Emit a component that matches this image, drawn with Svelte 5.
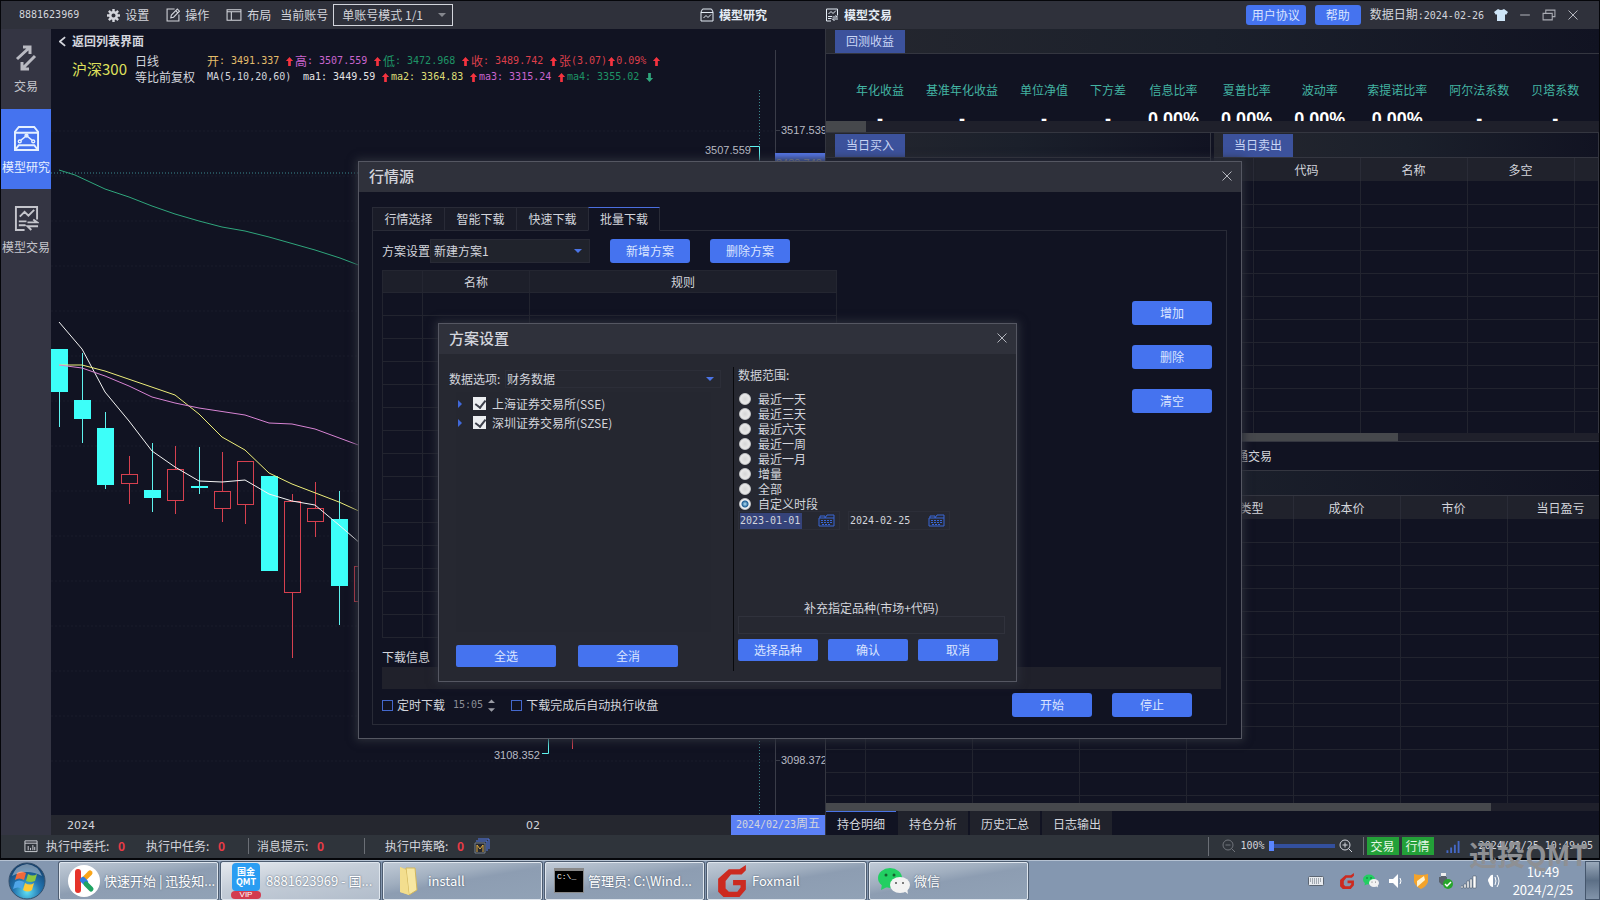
<script>
	let account = $state('单账号模式 1/1');
	let scheme = $state('新建方案1');
	let dataOption = $state('财务数据');
	let range = $state('自定义时段');
	let startDate = $state('2023-01-01');
	let endDate = $state('2024-02-25');
	let extraCodes = $state('');
	let zoom = $state(0);

	const priceRow = [
		{ label: '开', value: '3491.337', color: 'gold' },
		{ label: '高', value: '3507.559', color: 'violet' },
		{ label: '低', value: '3472.968', color: 'green' },
		{ label: '收', value: '3489.742', color: 'red' }
	];

	const maRow = [
		{ label: 'ma1', value: '3449.59', color: 'white' },
		{ label: 'ma2', value: '3364.83', color: 'yellow' },
		{ label: 'ma3', value: '3315.24', color: 'violet' },
		{ label: 'ma4', value: '3355.02', color: 'green', down: true }
	];

	const gridLines = Array.from({ length: 15 }, (_, i) => 41 + i * 45);

	// x, top and bottom of the body, top and bottom of the wick
	const candles = [
		{ x: 0, top: 259, bottom: 302, high: 302, low: 337, up: false },
		{ x: 23, top: 310, bottom: 329, high: 263, low: 353, up: false },
		{ x: 46, top: 338, bottom: 395, high: 322, low: 399, up: false },
		{ x: 70, top: 384, bottom: 394, high: 366, low: 414, up: true },
		{ x: 93, top: 400, bottom: 408, high: 353, low: 422, up: false },
		{ x: 116, top: 379, bottom: 411, high: 356, low: 424, up: true },
		{ x: 140, top: 396, bottom: 398, high: 357, low: 404, up: false },
		{ x: 163, top: 401, bottom: 419, high: 362, low: 432, up: true },
		{ x: 186, top: 371, bottom: 415, high: 371, low: 434, up: true },
		{ x: 210, top: 386, bottom: 481, high: 386, low: 481, up: false },
		{ x: 233, top: 411, bottom: 503, high: 404, low: 568, up: true },
		{ x: 256, top: 418, bottom: 432, high: 392, low: 447, up: true },
		{ x: 280, top: 429, bottom: 496, high: 401, low: 535, up: false },
		{ x: 303, top: 476, bottom: 512, high: 476, low: 512, up: true }
	];

	const averages = [
		{
			color: '#f4f4f4',
			points:
				'8,232 31,259 54,302 78,331 101,361 124,377 148,391 171,392 194,390 218,404 241,411 264,415 288,435 310,454'
		},
		{
			color: '#eeee7a',
			points: '8,275 31,275 54,281 124,305 148,324 171,347 194,360 218,383 241,394 288,412 310,422'
		},
		{
			color: '#d884d4',
			points:
				'8,275 31,278 54,286 78,296 101,307 124,313 148,318 194,325 218,333 241,334 264,339 310,356'
		},
		{
			color: '#2fa67c',
			points:
				'8,80 24,85 54,99 78,107 101,116 124,124 148,131 171,137 194,141 218,147 264,160 289,168 310,176'
		}
	];

	const metrics = [
		['年化收益', '-'],
		['基准年化收益', '-'],
		['单位净值', '-'],
		['下方差', '-'],
		['信息比率', '0.00%'],
		['夏普比率', '0.00%'],
		['波动率', '0.00%'],
		['索提诺比率', '0.00%'],
		['阿尔法系数', '-'],
		['贝塔系数', '-']
	];

	const sellColumns = ['', '代码', '名称', '多空', ''];
	const positionColumns = ['', '', '', '', '持仓类型', '成本价', '市价', '当日盈亏'];
	const positionTabs = ['持仓明细', '持仓分析', '历史汇总', '日志输出'];
	const sourceTabs = ['行情选择', '智能下载', '快速下载', '批量下载'];
	const ranges = [
		'最近一天',
		'最近三天',
		'最近六天',
		'最近一周',
		'最近一月',
		'增量',
		'全部',
		'自定义时段'
	];
	const exchanges = ['上海证券交易所(SSE)', '深圳证券交易所(SZSE)'];
	const rows = (n) => Array.from({ length: n });
</script>

{#snippet arrow(down)}
	<svg class="arrow" class:down viewBox="0 0 10 10"><path d="M5 0l4 4.500H6.500V10h-3V4.500H1z" /></svg>
{/snippet}

{#snippet cross()}
	<svg class="cross" viewBox="0 0 12 12"><path d="M1.500 1.500l9 9m0-9l-9 9" /></svg>
{/snippet}

{#snippet calendar()}
	<svg viewBox="0 0 17 13">
		<path d="M1 4h15v8H1zM2 4V2h5v2M7 4l2-3h7v3" />
		<path d="M3 6.500h11M3 8.500h11M4 10.500h9" stroke-dasharray="2 1" />
	</svg>
{/snippet}

{#snippet modelIcon()}
	<svg class="line-icon" viewBox="0 0 26 28">
		<path d="M5 2h16l4 5v19H1V7zM1 8h24M1 26l4-5h16l4 5" />
		<path d="M7 16l6-5 6 5" stroke-width="1.500" />
		<g stroke-width="1.500">
			<circle cx="6" cy="17" r="1.500" /><circle cx="20" cy="17" r="1.500" /><circle cx="13" cy="11" r="1.500" />
		</g>
	</svg>
{/snippet}

{#snippet tradeIcon()}
	<svg class="line-icon" viewBox="0 0 26 28">
		<path d="M24 15V2H2v24h9M6 12l5-5 4 4 6-6M5 17h8M5 21h7M14 18h10l-4-3M25 22H14l4 4" />
	</svg>
{/snippet}

{#snippet foxmail()}
	<svg viewBox="0 0 28 30">
		<path
			d="M27 0v5l-4 4H13l-5 6v7l3 3h8l3-4v-2h-7v-5h12v9l-6 7H6l-5-5V13L11 4h10z"
			fill="#cc2a20"
		/>
	</svg>
{/snippet}

{#snippet wechat()}
	<svg viewBox="0 0 32 28">
		<ellipse cx="12" cy="11" rx="12" ry="10" fill="#22cf62" />
		<path d="M4 17l-1 6 6-3z" fill="#22cf62" />
		<circle cx="8" cy="8" r="1.500" fill="#14632f" /><circle cx="16" cy="8" r="1.500" fill="#14632f" />
		<ellipse cx="22" cy="18" rx="10" ry="8" fill="#f2f2f2" />
		<path d="M26 24l4 3-1-6z" fill="#f2f2f2" />
		<circle cx="18" cy="16" r="1" fill="#555" /><circle cx="25" cy="16" r="1" fill="#555" />
	</svg>
{/snippet}

{#snippet grid(columns, count)}
	<table class="grid">
		<thead>
			<tr>
				{#each columns as column, i}
					<th class:index={i === 0}>{column}</th>
				{/each}
			</tr>
		</thead>
		<tbody>
			{#each rows(count) as _}
				<tr>
					{#each columns as _}
						<td></td>
					{/each}
				</tr>
			{/each}
		</tbody>
	</table>
{/snippet}

<div class="desktop">
	<div class="window">
		<header class="titlebar">
			<div class="menu">
				<span class="num account-id">8881623969</span>
				<button class="plain">
					<svg class="gear" viewBox="0 0 16 16">
						<circle cx="8" cy="8" r="4" />
						<path d="M8 0v4M8 12v4M0 8h4M12 8h4M2.300 2.300l3 3M10.700 10.700l3 3M13.700 2.300l-3 3M5.300 10.700l-3 3" />
					</svg>
					设置
				</button>
				<button class="plain">
					<svg class="line-icon" viewBox="0 0 26 26">
						<path d="M16 2H2v22h22V12M9 18l1-5L21 2l4 4-11 11zM18 5l4 4" />
					</svg>
					操作
				</button>
				<button class="plain">
					<svg class="line-icon wide" viewBox="0 0 30 24">
						<path d="M2 2h26v20H2zM2 6h26M10 6v16" />
					</svg>
					布局
				</button>
				<label for="account">当前账号</label>
				<div class="picker account">
					<select id="account" bind:value={account}>
						<option>单账号模式 1/1</option>
					</select>
				</div>
			</div>
			<div class="modes">
				<button class="plain">
					<svg class="line-icon" viewBox="0 0 26 28">
						<path d="M4 2h18l3 6v18H1V8zM1 9h24M6 20l5-5 4 4 6-6" />
					</svg>
					<b>模型研究</b>
				</button>
				<button class="plain">{@render tradeIcon()}<b>模型交易</b></button>
			</div>
			<div class="window-tools">
				<button class="primary small">用户协议</button>
				<button class="primary small">帮助</button>
				<span class="data-date">数据日期<span class="num">:2024-02-26</span></span>
				<button class="plain tool" aria-label="皮肤">
					<svg class="shirt" viewBox="0 0 14 12"><path d="M4 0q3 2 6 0l4 3-2 3-1-1v7H3V5L2 6 0 3z" /></svg>
				</button>
				<button class="plain tool" aria-label="最小化">
					<svg class="line-icon" viewBox="0 0 26 26"><path d="M4 13h18" /></svg>
				</button>
				<button class="plain tool" aria-label="还原">
					<svg class="line-icon" viewBox="0 0 26 26"><path d="M2 10h17v12H2zM7 10V4h17v12h-5" /></svg>
				</button>
				<button class="plain tool" aria-label="关闭窗口">{@render cross()}</button>
			</div>
		</header>

		<div class="workspace">
			<nav class="sidebar">
				<button>
					<svg class="swap" viewBox="0 0 22 24">
						<path d="M2 13L14 2M8 1h7v7M20 10L8 22M14 23H7v-7" />
					</svg>
					交易
				</button>
				<button class="active">{@render modelIcon()}模型研究</button>
				<button>{@render tradeIcon()}模型交易</button>
			</nav>

			<main class="chart">
				<div class="chart-head">
					<button class="plain back">
						<svg viewBox="0 0 8 12"><path d="M7 1L1 6l6 5" /></svg>
						<b>返回列表界面</b>
					</button>
					<div class="quote">
						<span class="symbol">沪深300</span>
						<div class="period">日线<br />等比前复权</div>
						<div class="figures">
							<div class="line">
								{#each priceRow as item}
									<span class="figure {item.color}">
										{item.label}<span class="num">: {item.value}</span>{@render arrow(false)}
									</span>
								{/each}
								<span class="figure change red">
									张<span class="num">(3.07)</span>{@render arrow(false)}<span class="num">0.09%</span>
									{@render arrow(false)}
								</span>
							</div>
							<div class="line">
								<span class="num ma-title">MA(5,10,20,60)</span>
								{#each maRow as item}
									<span class="figure {item.color}">
										<span class="num">{item.label}: {item.value}</span>{@render arrow(item.down)}
									</span>
								{/each}
							</div>
						</div>
					</div>
				</div>

				<div class="plot">
					<svg class="candles">
						{#each gridLines as y}
							<line class="guide" x1="0" x2="724" y1={y} y2={y} />
						{/each}
						<line class="crosshair" x1="0" x2="724" y1="83" y2="83" />
						<line class="crosshair" x1="708.500" x2="708.500" y1="0" y2="725" />
						{#each candles as c}
							<line
								class={c.up ? 'rise' : 'fall'}
								x1={c.x + 8.5}
								x2={c.x + 8.5}
								y1={c.high}
								y2={c.up ? c.top : c.low}
							/>
							{#if c.up}
								<line class="rise" x1={c.x + 8.5} x2={c.x + 8.5} y1={c.bottom} y2={c.low} />
								<rect class="rise" x={c.x + 0.5} y={c.top + 0.5} width="16" height={c.bottom - c.top - 1} />
							{:else}
								<rect class="fall" x={c.x} y={c.top} width="17" height={c.bottom - c.top} />
							{/if}
						{/each}
						{#each averages as avg}
							<polyline points={avg.points} stroke={avg.color} />
						{/each}
						<path class="marker" d="M699 56.500h9.500v14M491 663.500h6.500v-16" />
						<path class="rise" d="M521.500 645v14" />
						<text x="654" y="64">3507.559</text>
						<text x="443" y="669">3108.352</text>
					</svg>
					<svg class="axis">
						<line x1="0.500" x2="0.500" y1="-40" y2="725" />
						<path d="M0 40.500h5M0 670.500h5" />
						<text x="6" y="44">3517.539</text>
						<rect x="0" y="63" width="50" height="19" />
						<text x="1" y="77">3489.742</text>
						<text x="6" y="674">3098.372</text>
					</svg>
				</div>

				<div class="dates">
					<span>2024</span>
					<span class="february">02</span>
					<span class="current"><span class="num">2024/02/23</span>周五</span>
				</div>
			</main>

			<section class="panel">
				<div class="strip"><span class="badge">回测收益</span></div>
				<dl class="metrics">
					{#each metrics as [name, value]}
						<div>
							<dt>{name}</dt>
							<dd>{value}</dd>
						</div>
					{/each}
				</dl>
				<div class="scroll short"><i></i></div>
				<div class="deals">
					<div class="deal">
						<div class="strip"><span class="badge">当日买入</span></div>
					</div>
					<div class="deal">
						<div class="strip"><span class="badge">当日卖出</span></div>
						{@render grid(sellColumns, 12)}
					</div>
				</div>
				<div class="scroll half"><i></i></div>
				<div class="trade-kind"><span>普通交易</span></div>
				<div class="strip"></div>
				<div class="positions">{@render grid(positionColumns, 14)}</div>
				<div class="scroll long"><i></i></div>
				<div class="position-tabs">
					{#each positionTabs as tab, i}
						<button class:active={i === 0}>{tab}</button>
					{/each}
				</div>
			</section>
		</div>

		<footer class="status">
			<svg class="line-icon" viewBox="0 0 30 28">
				<path d="M2 3h26v23H2zM2 8h26M9 14v9M14 18v5M19 12v11M23 16v7" />
			</svg>
			<span>执行中委托: <b>0</b></span>
			<span>执行中任务: <b>0</b></span>
			<span class="divided">消息提示: <b>0</b></span>
			<span class="divided strategy">执行中策略: <b>0</b></span>
			<svg class="strategy-icon" viewBox="0 0 16 16">
				<path d="M4 1h11v10M2 3h11v10" stroke="#5578e8" />
				<path d="M1 5h10v10H1z" fill="#25272f" stroke="#77808c" />
				<path d="M3 14V7l3 4 3-4v7" stroke="#e3ae42" />
			</svg>
			<div class="status-right">
				<svg class="line-icon dim" viewBox="0 0 28 28">
					<circle cx="12" cy="12" r="10" /><path d="M7 12h10M19 19l7 7" />
				</svg>
				<span class="num">100%</span>
				<input type="range" min="0" max="100" bind:value={zoom} aria-label="缩放" />
				<svg class="line-icon" viewBox="0 0 28 28">
					<circle cx="12" cy="12" r="10" /><path d="M7 12h10M12 7v10M19 19l7 7" />
				</svg>
				<span class="lights"><em>交易</em><em>行情</em></span>
				<svg class="signal" viewBox="0 0 16 14">
					<path d="M1 11h2v3H1zM5 8h2v6H5zM9 5h2v9H9zM13 1h2v13h-2z" />
				</svg>
				<span class="num now">2024/02/25 10:49:05</span>
			</div>
		</footer>
	</div>

	<div class="taskbar">
		<svg class="start" viewBox="0 0 38 38">
			<defs>
				<radialGradient id="orb" cx="50%" cy="80%" r="75%">
					<stop offset="0" stop-color="#5fe0f5" />
					<stop offset="0.500" stop-color="#2274b0" />
					<stop offset="1" stop-color="#12406e" />
				</radialGradient>
			</defs>
			<circle cx="19" cy="19" r="18" fill="url(#orb)" stroke="#35506c" />
			<path d="M9 11q4-3 9 0l-2 7q-5-3-9 0z" fill="#f0693a" />
			<path d="M20 12q5 3 9 0l-2 7q-5 2-9 0z" fill="#8cc63e" />
			<path d="M7 20q4-3 9 0l-2 7q-4-3-9 0z" fill="#4fa5e8" />
			<path d="M17 21q5 3 9 0l-2 7q-4 3-9 0z" fill="#fdc937" />
			<path d="M4 14Q8 3 19 2q11 1 15 12-15-8-30 0z" fill="#fff" opacity="0.400" />
		</svg>
		<button class="task">
			<svg viewBox="0 0 32 32">
				<circle cx="16" cy="16" r="16" fill="#fff" />
				<path d="M10 7v18" stroke="#e6332a" stroke-width="6" stroke-linecap="round" />
				<path d="M15 15l7-7" stroke="#f9a51a" stroke-width="5" stroke-linecap="round" />
				<path d="M15 15l2 2" stroke="#2f7de0" stroke-width="6" stroke-linecap="round" />
				<path d="M18 19l5 5" stroke="#1fa463" stroke-width="5" stroke-linecap="round" />
			</svg>
			<span>快速开始 | 迅投知...</span>
		</button>
		<button class="task active">
			<span class="qmt"><b>国金<br />QMT</b><i>VIP</i></span>
			<span>8881623969 - 国...</span>
		</button>
		<button class="task">
			<svg viewBox="0 0 32 32">
				<path d="M8 2l9 3v25l-9-3z" fill="#e8d07c" />
				<path d="M14 3h9l2 22-8 5z" fill="#f7e7a2" stroke="#d3b75c" />
				<path d="M8 2l6 3 3 25-9-3z" fill="#f3de8e" />
			</svg>
			<span>install</span>
		</button>
		<button class="task">
			<span class="cmd">C:\_</span>
			<span>管理员: C:\Wind...</span>
		</button>
		<button class="task">{@render foxmail()}<span>Foxmail</span></button>
		<button class="task">{@render wechat()}<span>微信</span></button>

		<div class="tray">
			<svg class="keyboard" viewBox="0 0 16 10">
				<rect x="0.500" y="0.500" width="15" height="9" rx="1" fill="#e8ebef" stroke="#5c6673" />
				<path d="M2 3h12M2 5h12M4 7h8" stroke="#5c6673" stroke-dasharray="1 1" />
			</svg>
			{@render foxmail()}
			{@render wechat()}
			<svg viewBox="0 0 16 16"><path d="M2 6h4l5-5v14l-5-5H2z" fill="#fff" /><path d="M13 5q2 3 0 6" stroke="#fff" fill="none" /></svg>
			<svg class="shield" viewBox="0 0 16 16">
				<path d="M1 1q7 2 14 0v8q-2 5-7 7-5-2-7-7z" fill="#f3a32b" />
				<path d="M11 3L4 8v6l8-7z" fill="#fff3cf" />
			</svg>
			<svg viewBox="0 0 16 16">
				<path d="M4 0h5v4H4zM2 4h8v8H5L2 9z" fill="#59616b" /><path d="M4 0h5v3H4z" fill="#eee" />
				<circle cx="11" cy="11" r="5" fill="#27a52c" /><path d="M8 11l2 2 4-4" stroke="#fff" stroke-width="1.500" fill="none" />
			</svg>
			<svg viewBox="0 0 16 16"><path d="M0 13h2v2H0zM3 11h2v4H3zM6 8h2v7H6zM9 6h2v9H9zM12 3h3v12h-3z" fill="#fff" stroke="#46505c" stroke-width="0.500" /></svg>
			<svg viewBox="0 0 16 16">
				<path d="M4 5q2-4 4-3v12q-3 0-4-4-2-3 0-5z" fill="#fff" />
				<path d="M10 4q2 4 0 8M12 2q4 6 0 12" stroke="#fff" fill="none" />
			</svg>
			<div class="clock">10:49<br />2024/2/25</div>
			<button class="show-desktop" aria-label="显示桌面"></button>
		</div>
	</div>

	<div class="watermark">迅投QMT</div>

	<div class="dialog source">
		<div class="dialog-title">
			<h2>行情源</h2>
			<button class="plain" aria-label="关闭">{@render cross()}</button>
		</div>
		<div class="source-body">
			<div class="tabs">
				{#each sourceTabs as tab}
					<button class:active={tab === '批量下载'}>{tab}</button>
				{/each}
				<i></i>
			</div>
			<div class="frame">
				<div class="scheme-row">
					<label for="scheme">方案设置</label>
					<div class="picker scheme">
						<select id="scheme" bind:value={scheme}>
							<option>新建方案1</option>
						</select>
					</div>
					<button class="primary">新增方案</button>
					<button class="primary">删除方案</button>
				</div>
				<div class="rules-row">
					<table class="rules">
						<thead>
							<tr><th class="no"></th><th class="name">名称</th><th>规则</th></tr>
						</thead>
						<tbody>
							{#each rows(15) as _}
								<tr><td></td><td></td><td></td></tr>
							{/each}
						</tbody>
					</table>
					<div class="rule-actions">
						<button class="primary">增加</button>
						<button class="primary">删除</button>
						<button class="primary">清空</button>
					</div>
				</div>
				<div class="download-label">下载信息</div>
				<div class="progress"></div>
				<div class="run-row">
					<label><input type="checkbox" />定时下载</label>
					<span class="num time">15:05</span>
					<svg class="spinner" viewBox="0 0 8 14"><path d="M4 0l4 4H0zM4 14l4-4H0z" /></svg>
					<label><input type="checkbox" />下载完成后自动执行收盘</label>
					<div class="run-actions">
						<button class="primary">开始</button>
						<button class="primary">停止</button>
					</div>
				</div>
			</div>
		</div>
	</div>

	<div class="dialog setup">
		<div class="dialog-title">
			<h2>方案设置</h2>
			<button class="plain" aria-label="关闭">{@render cross()}</button>
		</div>
		<div class="setup-body">
			<div class="options">
				<div class="option-row">
					<label for="data-option">数据选项:</label>
					<div class="picker option">
						<select id="data-option" bind:value={dataOption}>
							<option>财务数据</option>
						</select>
					</div>
				</div>
				<ul class="tree">
					{#each exchanges as exchange}
						<li>
							<i></i>
							<label><input type="checkbox" checked />{exchange}</label>
						</li>
					{/each}
				</ul>
				<div class="select-actions">
					<button class="primary">全选</button>
					<button class="primary">全消</button>
				</div>
			</div>
			<div class="range">
				<div class="range-title">数据范围:</div>
				{#each ranges as name}
					<label class="radio">
						<input type="radio" name="range" value={name} bind:group={range} />{name}
					</label>
				{/each}
				<div class="date-row">
					<div class="date selected">
						<input class="num" type="text" aria-label="开始日期" bind:value={startDate} />
						{@render calendar()}
					</div>
					<div class="date">
						<input class="num" type="text" aria-label="结束日期" bind:value={endDate} />
						{@render calendar()}
					</div>
				</div>
				<label class="extra" for="extra">补充指定品种(市场+代码)</label>
				<input id="extra" class="extra-input" type="text" bind:value={extraCodes} />
				<div class="confirm-actions">
					<button class="primary">选择品种</button>
					<button class="primary">确认</button>
					<button class="primary">取消</button>
				</div>
			</div>
		</div>
	</div>
</div>

<style>
	:global(body) {
		background: #000;
		overflow: hidden;
	}

	.desktop {
		--bg: #111322;
		--bar: #2f313b;
		--line: #22242f;
		--edge: #343640;
		--blue: #4573ef;
		--text: #d3d5dc;
		position: relative;
		display: flex;
		flex-direction: column;
		height: 100vh;
		color: var(--text);
		font-family: 'Noto Sans CJK SC', sans-serif;
		font-size: 12px;
		line-height: 16px;
		overflow: hidden;
	}

	.desktop :global(*) {
		box-sizing: border-box;
	}

	button,
	input,
	select {
		font: inherit;
		color: inherit;
		margin: 0;
		padding: 0;
		border: none;
		background: none;
	}

	label,
	button,
	span {
		white-space: nowrap;
	}

	.num {
		font-family: 'DejaVu Sans Mono', monospace;
		font-size: 10px;
	}

	.plain {
		display: flex;
		align-items: center;
		gap: 5px;
	}

	.primary {
		width: 80px;
		height: 24px;
		border-radius: 3px;
		background: var(--blue);
		color: #dbe5ff;
		line-height: 22px;
	}

	.line-icon {
		width: 14px;
		height: 14px;
		fill: none;
		stroke: currentColor;
		stroke-width: 2;
		flex: none;
	}

	.cross {
		width: 12px;
		height: 12px;
		stroke: #b4b6be;
		fill: none;
	}

	.picker {
		position: relative;
	}

	.picker select {
		appearance: none;
		width: 100%;
		height: 100%;
	}

	.picker::after {
		content: '';
		position: absolute;
		right: 6px;
		top: 50%;
		margin-top: -2px;
		border: 4px solid transparent;
		border-top-color: #4b74e6;
		border-bottom: none;
		pointer-events: none;
	}

	.window {
		flex: 1;
		min-height: 0;
		display: flex;
		flex-direction: column;
		border: 1px solid #05060a;
		border-bottom-width: 2px;
		background: var(--bg);
	}

	/* title bar */
	.titlebar {
		display: grid;
		grid-template-columns: 698px 1fr auto;
		align-items: center;
		height: 28px;
		background: var(--bar);
		flex: none;
	}

	.menu,
	.modes,
	.window-tools {
		display: flex;
		align-items: center;
	}

	.account-id {
		margin: 0 28px 0 18px;
	}

	.menu .plain {
		margin-right: 17px;
	}

	.menu .plain:nth-of-type(3) {
		margin-right: 9px;
	}

	.gear {
		width: 13px;
		height: 13px;
		fill: none;
		stroke: currentColor;
		stroke-width: 3;
	}

	.wide {
		width: 16px;
	}

	.picker.account {
		width: 120px;
		height: 22px;
		margin-left: 5px;
		border: 1px solid #d3d5dc;
	}

	.picker.account select {
		padding-left: 8px;
	}

	.picker.account::after {
		border-top-color: #85878e;
	}

	.modes {
		gap: 58px;
		padding-left: 1px;
		color: #e4ecf5;
	}

	.window-tools {
		padding-right: 19px;
		gap: 9px;
	}

	.small {
		width: auto;
		height: 20px;
		padding: 0 6px;
		line-height: 18px;
	}

	.small:nth-child(2) {
		padding: 0 11px;
	}

	.shirt {
		width: 14px;
		height: 12px;
		fill: #cfe6f8;
	}

	.tool {
		width: 15px;
		justify-content: center;
		color: #a9abb3;
	}

	/* columns under the title bar */
	.workspace {
		flex: 1;
		min-height: 0;
		display: grid;
		grid-template-rows: minmax(0, 1fr);
		grid-template-columns: 50px minmax(0, 1fr) minmax(0, 1fr);
	}

	.sidebar {
		background: #343543;
		display: flex;
		flex-direction: column;
	}

	.sidebar button {
		height: 80px;
		padding-top: 1px;
		display: flex;
		flex-direction: column;
		align-items: center;
		justify-content: center;
		gap: 7px;
		color: #c4c5cc;
		font-size: 12px;
	}

	.sidebar .active {
		background: var(--blue);
		color: #e5f0ff;
	}

	.sidebar .line-icon {
		width: 25px;
		height: 27px;
	}

	.swap {
		width: 22px;
		height: 26px;
		fill: none;
		stroke: #b9bac2;
		stroke-width: 3;
	}

	/* chart */
	.chart {
		display: flex;
		flex-direction: column;
		min-width: 0;
	}

	.chart-head {
		height: 61px;
		padding: 4px 0 0 8px;
		flex: none;
	}

	.back {
		gap: 6px;
	}

	.back svg {
		width: 7px;
		height: 11px;
		fill: none;
		stroke: var(--text);
		stroke-width: 2;
	}

	.quote {
		display: flex;
		padding: 4px 0 0 13px;
	}

	.symbol {
		width: 63px;
		color: #dfe05c;
		font-size: 15px;
		line-height: 32px;
	}

	.period {
		width: 72px;
		white-space: nowrap;
	}

	.line {
		display: flex;
		height: 16px;
	}

	.figure {
		display: flex;
		align-items: center;
		width: 88px;
	}

	.figure .num,
	.ma-title {
		white-space: pre;
		line-height: 16px;
	}

	.figure.change {
		width: 110px;
	}

	.ma-title {
		width: 96px;
	}

	.arrow {
		width: 9px;
		height: 9px;
		margin-left: 6px;
		fill: #f5333f;
		flex: none;
	}

	.change .arrow:first-of-type {
		margin-left: 0;
	}

	.arrow.down {
		fill: #2fa67c;
		transform: rotate(180deg);
	}

	.gold {
		color: #e3bd6b;
	}
	.violet {
		color: #c965cf;
	}
	.green {
		color: #1e9366;
	}
	.red {
		color: #dd3f4b;
	}
	.yellow {
		color: #dede77;
	}
	.white {
		color: #e4e4e4;
	}

	.plot {
		flex: 1;
		min-height: 0;
		display: flex;
	}

	.candles {
		flex: 1;
		min-width: 0;
		height: 100%;
		fill: none;
	}

	.axis {
		width: 50px;
		height: 100%;
		overflow: visible;
		clip-path: inset(-40px 0 0 0);
		flex: none;
	}

	.axis line,
	.axis path {
		stroke: #3a3c48;
	}

	.axis rect {
		fill: #5577ea;
	}

	.plot text {
		fill: #b9bbc4;
		font-family: 'Liberation Sans', sans-serif;
		font-size: 11px;
	}

	.guide {
		stroke: #1b1d2a;
		stroke-dasharray: 2 2;
	}

	.crosshair {
		stroke: #3a8a90;
		stroke-dasharray: 1 2;
	}

	line.fall,
	.marker {
		stroke: #5ff3ee;
	}

	rect.fall {
		fill: #3dfff9;
	}

	.rise {
		stroke: #d6404f;
	}

	.dates {
		display: flex;
		height: 20px;
		padding-left: 16px;
		background: #25272f;
		font-family: 'DejaVu Sans', 'Noto Sans CJK SC', sans-serif;
		font-size: 11px;
		line-height: 22px;
		flex: none;
	}

	.february {
		margin-left: 431px;
	}

	.dates .current {
		margin-left: auto;
		width: 94px;
		background: #5b80f6;
		text-align: center;
		font-size: 12px;
		line-height: 19px;
	}

	/* back-test panel */
	.panel {
		display: flex;
		flex-direction: column;
		min-width: 0;
		border-left: 1px solid var(--edge);
	}

	.strip {
		display: flex;
		height: 25px;
		padding: 1px 0 0 9px;
		background: linear-gradient(90deg, #25272f, #1b202b 50%, var(--bg));
		border-bottom: 1px solid var(--edge);
		flex: none;
	}

	.badge {
		width: 70px;
		background: #3c529c;
		color: #c9d5f5;
		text-align: center;
		line-height: 22px;
	}

	.metrics {
		display: flex;
		gap: 22px;
		height: 67px;
		margin: 0;
		padding: 28px 0 0 30px;
		overflow: hidden;
		flex: none;
	}

	.metrics div {
		text-align: center;
		white-space: nowrap;
	}

	.metrics dt {
		color: #43b5a3;
	}

	.metrics dd {
		margin: 11px 0 0;
		color: #fff;
		font: bold 18px/20px 'Liberation Sans', sans-serif;
	}

	.scroll {
		height: 8px;
		background: #1f202b;
		flex: none;
	}

	.scroll i {
		display: block;
		height: 100%;
		background: #46484c;
	}

	.scroll.short {
		height: 12px;
		border-bottom: 1px solid var(--edge);
	}

	.short i {
		width: 40px;
	}

	.half i {
		width: 74%;
	}

	.long i {
		width: 86%;
	}

	.deals {
		display: grid;
		grid-template-columns: 1fr 1fr;
		gap: 3px;
		height: 300px;
		flex: none;
	}

	.deal {
		overflow: hidden;
		border-right: 1px solid var(--edge);
	}

	.grid {
		border-collapse: collapse;
		table-layout: fixed;
		width: 0;
	}

	.grid th {
		width: 107px;
		height: 23px;
		padding: 0;
		background: #20222c;
		border-right: 1px solid #2a2c37;
		font-weight: normal;
		white-space: nowrap;
	}

	.grid .index {
		width: 39px;
	}

	.grid td {
		height: 23px;
		padding: 0;
		border: solid var(--line);
		border-width: 0 1px 1px 0;
	}

	.trade-kind {
		height: 30px;
		padding-left: 398px;
		border-top: 1px solid var(--edge);
		border-bottom: 1px solid var(--edge);
		line-height: 28px;
		flex: none;
	}

	.positions {
		flex: 1;
		min-height: 0;
		overflow: hidden;
	}

	.position-tabs {
		display: flex;
		gap: 2px;
		height: 24px;
		flex: none;
	}

	.position-tabs button {
		width: 70px;
		background: #20222b;
		border-top: 1px solid transparent;
	}

	.position-tabs .active {
		background: var(--bg);
		border-top-color: #4b74e6;
	}

	/* status bar */
	.status {
		display: flex;
		align-items: center;
		height: 23px;
		padding: 0 0 1px 23px;
		background: #2f343b;
		flex: none;
	}

	.status > span {
		margin-left: 8px;
		min-width: 92px;
	}

	.status > .divided {
		margin-left: 10px;
		padding-left: 8px;
		border-left: 1px solid #6b6f76;
	}

	.status > .strategy {
		margin-left: 24px;
		padding-left: 20px;
		min-width: 110px;
	}

	.status b {
		margin-left: 6px;
		color: #ea3b46;
	}

	.strategy-icon {
		width: 16px;
		height: 16px;
		fill: none;
	}

	.status-right {
		display: flex;
		align-items: center;
		gap: 4px;
		height: 19px;
		margin-left: auto;
		padding: 0 6px 0 13px;
		border-left: 1px solid #6b6f76;
	}

	.dim {
		opacity: 0.4;
	}

	input[type='range'] {
		appearance: none;
		width: 66px;
		height: 4px;
		background: #33509e;
	}

	input[type='range']::-webkit-slider-thumb {
		appearance: none;
		width: 5px;
		height: 10px;
		background: #5a86ff;
	}

	.lights {
		display: flex;
		gap: 3px;
		margin-left: 6px;
		padding-left: 3px;
		border-left: 1px solid #6b6f76;
	}

	.lights em {
		padding: 1px 4px;
		background: #23a038;
		color: #e5f7e7;
		font-style: normal;
	}

	.signal {
		width: 16px;
		height: 13px;
		margin: 0 14px 0 7px;
		fill: #4468c8;
	}

	/* taskbar */
	.taskbar {
		display: flex;
		align-items: center;
		gap: 3px;
		height: 40px;
		background: #8497b0;
		border-top: 1px solid #b5c2d2;
		color: #fff;
		font-size: 13px;
		flex: none;
	}

	.start {
		width: 38px;
		height: 38px;
		margin: 0 10px 0 8px;
	}

	.task {
		display: flex;
		align-items: center;
		gap: 4px;
		width: 159px;
		height: 38px;
		padding: 0 8px;
		border: 1px solid #dfe6ee;
		border-radius: 2px;
		box-shadow: 0 0 0 1px #4d5c70;
		background: linear-gradient(170deg, #c0cad6 0, #a0aebf 35%, #8d9db2 50%, #91a2b6);
	}

	.task.active {
		background: linear-gradient(170deg, #e5e9ee 0, #c3ccd7 45%, #b2bdcb);
	}

	.task svg {
		width: 32px;
		height: 32px;
		flex: none;
		fill: none;
	}

	.task > span:last-child {
		text-shadow: 0 0 2px #46566a;
	}

	.qmt {
		display: flex;
		flex-direction: column;
		align-items: center;
		width: 32px;
		flex: none;
	}

	.qmt b {
		width: 28px;
		height: 28px;
		padding-top: 4px;
		border-radius: 4px;
		background: #2a9df2;
		font-size: 9px;
		line-height: 10px;
	}

	.qmt i {
		width: 30px;
		height: 8px;
		border-radius: 4px;
		background: #d33c50;
		font: 8px/8px 'Liberation Sans', sans-serif;
	}

	.cmd {
		width: 30px;
		height: 25px;
		padding: 1px 2px;
		border: 1px solid #888;
		border-top-width: 3px;
		background: #000;
		font: 8px/10px 'Liberation Mono', monospace;
		text-align: left;
		flex: none;
	}

	.tray {
		display: flex;
		align-items: center;
		gap: 8px;
		height: 100%;
		margin-left: auto;
	}

	.tray svg {
		width: 16px;
		height: 16px;
	}

	.tray .keyboard {
		margin-right: 7px;
	}

	.tray .shield {
		margin-left: 2px;
	}

	.clock {
		width: 68px;
		text-align: center;
		line-height: 18px;
	}

	.show-desktop {
		width: 15px;
		height: 100%;
		border: 1px solid #45566c;
		background: linear-gradient(#9aa9bb, #5c6f86 50%, #8294aa);
	}

	.watermark {
		position: absolute;
		right: 12px;
		bottom: 30px;
		color: #8e9094;
		font-size: 28px;
		font-weight: bold;
		line-height: 32px;
	}

	/* dialogs */
	.dialog {
		position: absolute;
		border: 1px solid #555762;
		box-shadow: 0 0 8px 2px #2b2e39;
	}

	.dialog-title {
		display: flex;
		align-items: center;
		justify-content: space-between;
		height: 30px;
		padding: 0 8px 2px 10px;
		background: var(--bar);
	}

	.dialog h2 {
		margin: 0;
		font-size: 15px;
		font-weight: 500;
		line-height: 28px;
	}

	.source {
		top: 161px;
		left: calc(50% - 442px);
		width: 884px;
		background: var(--bg);
	}

	.source-body {
		padding: 15px 14px 13px 13px;
	}

	.tabs {
		display: flex;
	}

	.tabs button {
		width: 72px;
		height: 24px;
		background: #1a1c28;
		border: 1px solid #292b37;
		border-right: none;
	}

	.tabs .active {
		background: var(--bg);
		border-top-color: #4b6fe0;
		border-right: 1px solid #292b37;
		border-bottom-color: transparent;
	}

	.tabs i {
		flex: 1;
		border-bottom: 1px solid #292b37;
	}

	.frame {
		padding: 8px 5px 7px 9px;
		border: 1px solid #292b37;
		border-top: none;
	}

	.scheme-row {
		display: flex;
		align-items: center;
		height: 24px;
	}

	.scheme-row .primary {
		margin-left: 20px;
	}

	.picker.scheme {
		width: 160px;
		height: 24px;
		background: #20232c;
		border: 1px solid #282a35;
	}

	.picker.scheme::after {
		right: 7px;
	}

	.picker.scheme select {
		padding-left: 3px;
	}

	.rules-row {
		display: flex;
		justify-content: space-between;
		margin-top: 7px;
	}

	.rules {
		width: 455px;
		border-collapse: collapse;
		table-layout: fixed;
	}

	.rules th {
		height: 22px;
		padding: 0;
		background: #1d1f2a;
		border: 1px solid #242631;
		font-weight: normal;
	}

	.rules .no {
		width: 40px;
	}

	.rules .name {
		width: 107px;
	}

	.rules td {
		height: 23px;
		padding: 0;
		border: 1px solid var(--line);
	}

	.rule-actions {
		display: flex;
		flex-direction: column;
		gap: 20px;
		padding: 31px 9px 0 0;
	}

	.download-label {
		margin-top: 9px;
		line-height: 20px;
	}

	.progress {
		height: 22px;
		background: #20212b;
	}

	.run-row {
		display: flex;
		align-items: center;
		height: 24px;
		margin-top: 4px;
	}

	.run-row label {
		display: flex;
		align-items: center;
		gap: 4px;
	}

	.run-row input {
		appearance: none;
		width: 11px;
		height: 11px;
		border: 1px solid #4468cc;
	}

	.time {
		margin-left: 8px;
		color: #8c8e97;
	}

	.spinner {
		width: 7px;
		height: 13px;
		margin: 0 16px 0 5px;
		fill: #9a9ca5;
	}

	.run-actions {
		display: flex;
		gap: 20px;
		margin: 0 29px 0 auto;
	}

	.setup {
		top: 323px;
		left: calc(50% - 362px);
		width: 579px;
		background: #262831;
	}

	.setup-body {
		display: flex;
		padding: 13px 11px 10px 10px;
	}

	.options {
		width: 285px;
		padding-top: 3px;
		border-right: 1px solid #08090d;
	}

	.option-row {
		display: flex;
		align-items: center;
		gap: 4px;
	}

	.picker.option {
		width: 216px;
		height: 18px;
		border: 1px solid #2c2e38;
	}

	.picker.option select {
		padding-left: 1px;
	}

	.option-row label {
		width: 52px;
	}

	.tree {
		height: 240px;
		margin: 4px 22px 0 7px;
		padding: 2px 0 0 2px;
		background: #252730;
		list-style: none;
	}

	.tree li {
		display: flex;
		align-items: center;
		height: 19px;
	}

	.tree i {
		margin-right: 11px;
		border: 4px solid transparent;
		border-left-color: #4068d8;
		border-right: none;
	}

	.tree label {
		display: flex;
		align-items: center;
		gap: 6px;
	}

	.tree input {
		appearance: none;
		width: 13px;
		height: 13px;
		background: #eceef1;
	}

	.tree input:checked::after {
		content: '';
		display: block;
		width: 5px;
		height: 8px;
		margin: 1px 0 0 4px;
		border: solid #3c3f4a;
		border-width: 0 2px 2px 0;
		transform: rotate(38deg);
	}

	.select-actions {
		display: flex;
		gap: 22px;
		margin: 13px 0 4px 7px;
	}

	.select-actions .primary {
		width: 100px;
		height: 22px;
		line-height: 20px;
		border-radius: 2px;
	}

	.range {
		display: flex;
		flex-direction: column;
		flex: 1;
		padding-left: 4px;
	}

	.range-title {
		margin-bottom: 8px;
	}

	.radio {
		display: flex;
		align-items: center;
		gap: 7px;
		height: 15px;
		line-height: 15px;
		padding-left: 1px;
	}

	.radio input {
		appearance: none;
		width: 12px;
		height: 12px;
		border: 1px solid #c4c6c8;
		border-radius: 50%;
		background: radial-gradient(circle, #d5d6d6, #f4f4f4);
	}

	.radio input:checked {
		background: radial-gradient(circle, #b5e2f5 0, #1f5f96 3px, #f0f2f4 4px);
	}

	.date-row {
		display: flex;
		gap: 8px;
	}

	.date {
		display: flex;
		align-items: center;
		justify-content: space-between;
		width: 102px;
		height: 19px;
		padding: 0 4px 0 1px;
		border: 1px solid #2c2e38;
	}

	.date input {
		width: 62px;
	}

	.date.selected input {
		background: #35437a;
	}

	.date svg {
		width: 17px;
		height: 13px;
		fill: none;
		stroke: #3967d6;
	}

	.extra {
		margin-top: 70px;
		text-align: center;
	}

	.extra-input {
		height: 18px;
		border: 1px solid #30323c;
	}

	.confirm-actions {
		display: flex;
		gap: 10px;
		margin-top: 5px;
	}

	.confirm-actions .primary {
		height: 22px;
		line-height: 20px;
		border-radius: 2px;
	}
</style>
